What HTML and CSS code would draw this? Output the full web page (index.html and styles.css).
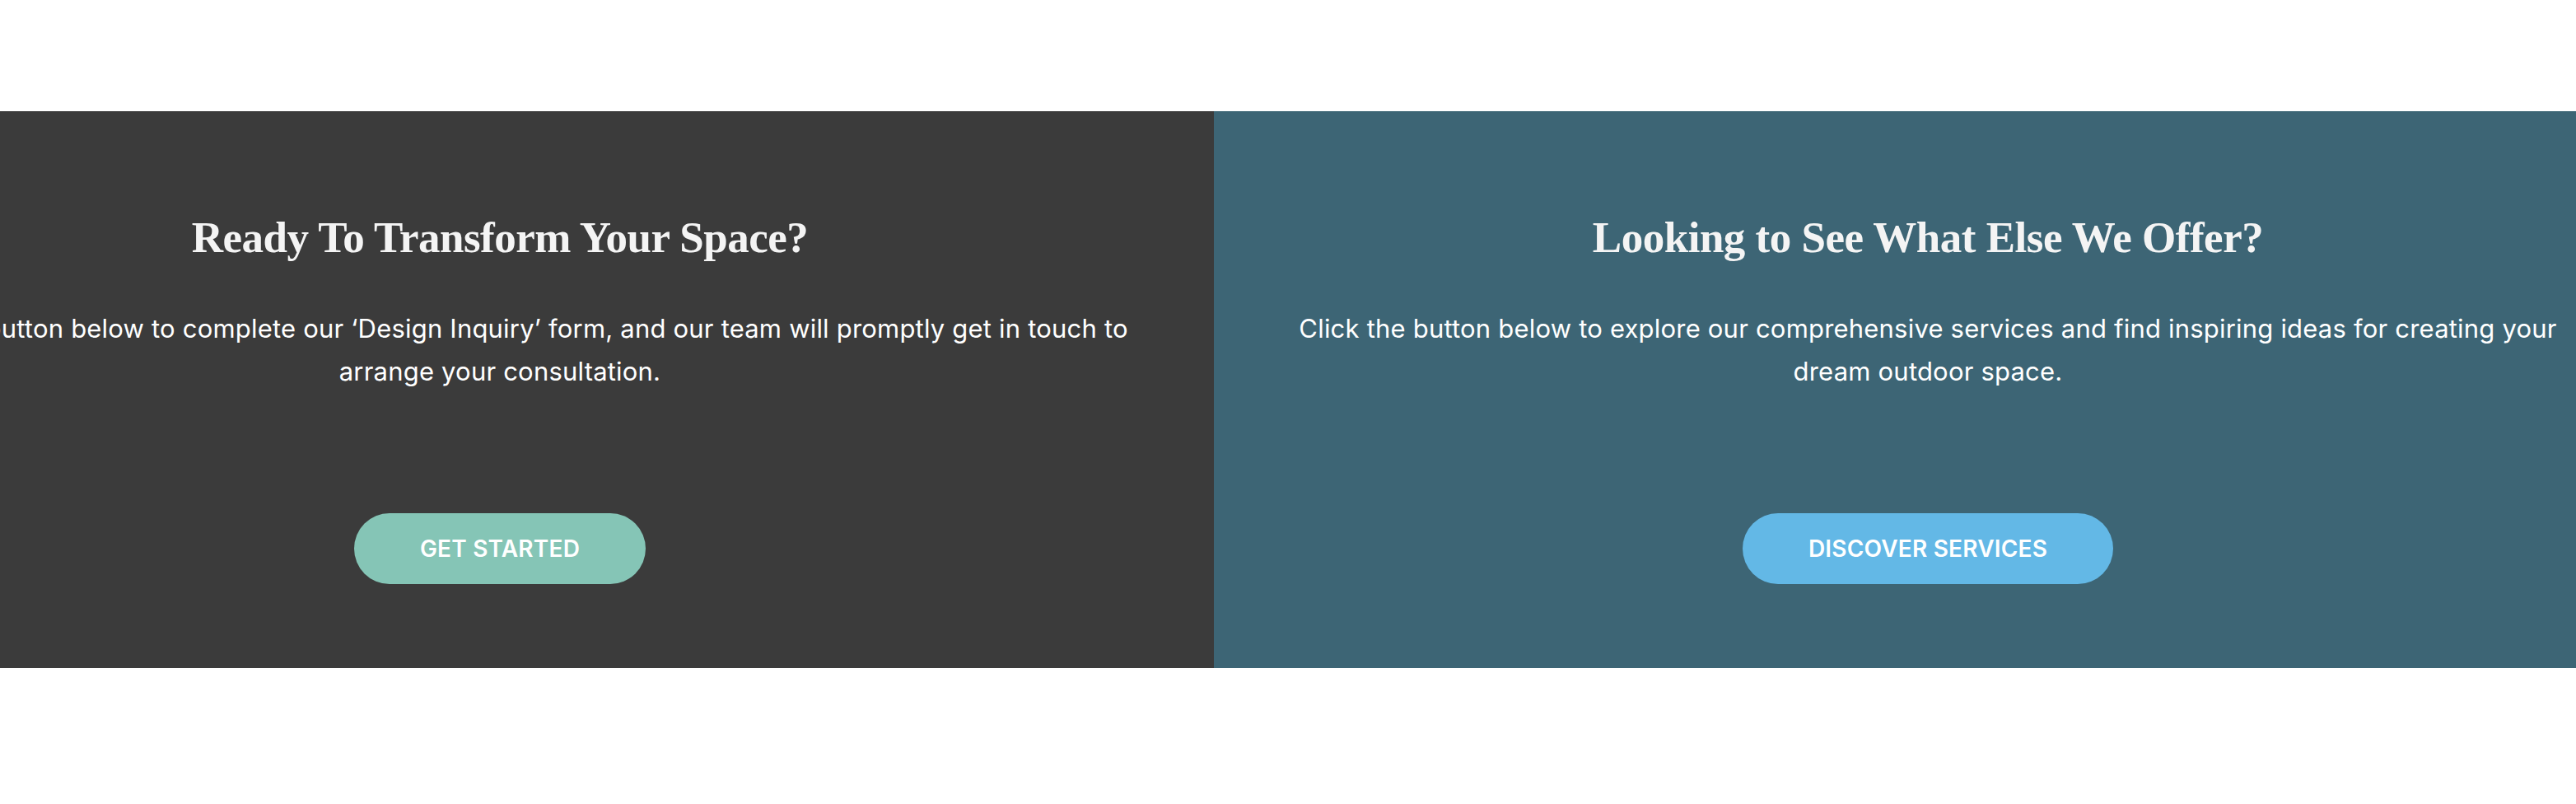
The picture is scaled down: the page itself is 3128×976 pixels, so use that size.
FILE: index.html
```html
<!DOCTYPE html>
<html lang="en">
<head>
<meta charset="utf-8">
<title>Call to action</title>
<link rel="stylesheet" href="styles.css">
</head>
<body>
<main class="page">
  <section class="cta">
    <div class="panel panel-dark">
      <h2 class="panel-title">Ready To Transform Your Space?</h2>
      <p class="panel-text">Click the button below to complete our ‘Design Inquiry’ form, and our team will promptly get in touch to arrange your consultation.</p>
      <a class="btn btn-green" href="#">GET STARTED</a>
    </div>
    <div class="panel panel-teal">
      <h2 class="panel-title">Looking to See What Else We Offer?</h2>
      <p class="panel-text">Click the button below to explore our comprehensive services and find inspiring ideas for creating your dream outdoor space.</p>
      <a class="btn btn-blue" href="#">DISCOVER SERVICES</a>
    </div>
  </section>
</main>
</body>
</html>
```

FILE: styles.css
```css
html, body {
  margin: 0;
  padding: 0;
  background: #ffffff;
  overflow: hidden;
}

.page {
  padding: 135px 0 165px;
  font-family: "Inter", "Open Sans", sans-serif;
}

.cta {
  display: grid;
  grid-template-columns: 1fr 1fr;
  width: 3468px;
  margin-left: -260px;
  height: 676px;
}

.panel {
  display: flex;
  flex-direction: column;
  align-items: center;
  padding: 122px 80px 0;
  color: #ffffff;
  text-align: center;
}

.panel-dark {
  background: #3b3b3b;
}

.panel-teal {
  background: #3d6575;
}

.panel-title {
  margin: 0;
  font-family: "Liberation Serif", "DejaVu Serif", serif;
  font-weight: bold;
  font-size: 53px;
  line-height: 1.2;
  letter-spacing: -0.5px;
  color: #f4f4f4;
}

.panel-text {
  margin: 52px 0 0;
  max-width: 1560px;
  font-size: 31px;
  line-height: 52px;
  font-weight: 400;
  letter-spacing: 0.2px;
}

.btn {
  margin-top: 146px;
  display: inline-flex;
  align-items: center;
  justify-content: center;
  height: 86px;
  padding: 0 80px;
  border-radius: 43px;
  color: #ffffff;
  text-decoration: none;
  font-size: 28px;
  font-weight: 600;
  letter-spacing: 0.2px;
}

.btn-green {
  background: #85c5b6;
}

.btn-blue {
  background: #63b8e6;
}
```
